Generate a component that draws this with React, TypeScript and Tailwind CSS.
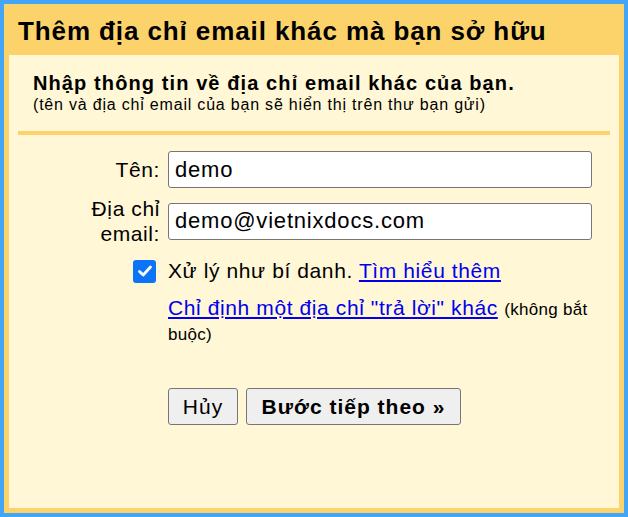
import React from "react";

export default function App() {
  return (
    <div
      className="w-[628px] h-[517px] bg-[#42a5f5] p-[4px]"
      style={{ fontFamily: '"Liberation Sans", Arial, sans-serif' }}
    >
      <div className="w-full h-full bg-[#fcd36a] px-[5px] pb-[5px] flex flex-col">
        <div className="h-[51px] pl-[9px] flex items-center text-[26px] font-bold text-black leading-[30px] pt-[2px] tracking-[0.9px]">
          Thêm địa chỉ email khác mà bạn sở hữu
        </div>
        <div className="flex-1 bg-[#fff7d6] flex flex-col">
          <div className="pl-[24px] pt-[17px]">
            <div className="text-[20px] font-bold leading-[22px] text-black tracking-[1.1px]">
              Nhập thông tin về địa chỉ email khác của bạn.
            </div>
            <div className="text-[16px] leading-[19px] mt-[1px] text-black tracking-[0.8px]">
              (tên và địa chỉ email của bạn sẽ hiển thị trên thư bạn gửi)
            </div>
          </div>
          <div className="mx-[9px] mt-[17px] h-[4px] bg-[#fcd36a]" />

          <div className="flex flex-col mt-[16px] text-[21px] text-black tracking-[0.6px]">
            <div className="flex items-center">
              <div className="w-[159px] text-right pr-[8px] leading-[24px]">Tên:</div>
              <div className="w-[424px] h-[37px] bg-white border border-[#767676] rounded-[3px] flex items-center px-[6px] leading-[24px] text-[22px] tracking-[0.8px]">
                demo
              </div>
            </div>
            <div className="flex items-center mt-[8px]">
              <div className="w-[159px] text-right pr-[8px] leading-[25px]">
                Địa chỉ
                <br />
                email:
              </div>
              <div className="w-[424px] h-[37px] bg-white border border-[#767676] rounded-[3px] flex items-center px-[6px] leading-[24px] text-[22px] tracking-[0.8px]">
                demo@vietnixdocs.com
              </div>
            </div>

            <div className="flex items-center mt-[13px]">
              <div className="w-[159px] flex justify-end pr-[12px]">
                <div className="w-[23px] h-[23px] rounded-[3px] bg-[#0b74f7] flex items-center justify-center">
                  <svg width="16" height="16" viewBox="0 0 16 16">
                    <path
                      d="M2.5 8.5 L6.2 12 L13.5 4"
                      fill="none"
                      stroke="white"
                      strokeWidth="2.8"
                      strokeLinecap="round"
                      strokeLinejoin="round"
                    />
                  </svg>
                </div>
              </div>
              <div className="leading-[24px]">
                Xử lý như bí danh.{" "}
                <a className="text-[#0000ee] underline" href="#">
                  Tìm hiểu thêm
                </a>
              </div>
            </div>

            <div className="pl-[159px] mt-[13px] w-[590px] leading-[23px]">
              <a className="text-[#0000ee] underline" href="#">
                Chỉ định một địa chỉ "trả lời" khác
              </a>{" "}
              <span className="text-[17px] tracking-[0.3px]">(không bắt</span>{" "}
              <span className="text-[17px] tracking-[0.3px]">buộc)</span>
            </div>

            <div className="pl-[159px] mt-[42px] flex gap-[8px]">
              <button className="h-[37px] w-[70px] bg-[#efefef] border border-[#767676] rounded-[3px] text-[21px] leading-[24px] tracking-[1px]">
                Hủy
              </button>
              <button className="h-[37px] w-[215px] bg-[#efefef] border border-[#767676] rounded-[3px] text-[21px] font-bold leading-[24px] tracking-[1px]">
                Bước tiếp theo »
              </button>
            </div>
          </div>
        </div>
      </div>
    </div>
  );
}
